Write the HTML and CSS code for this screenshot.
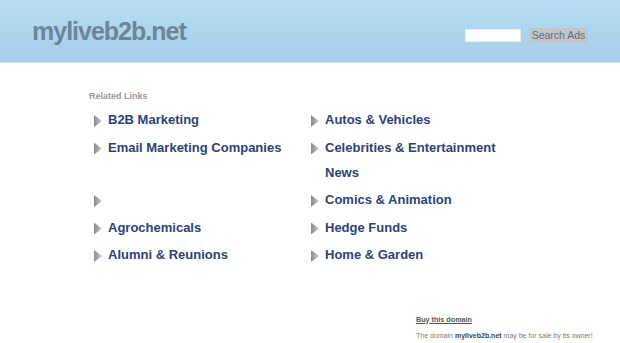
FILE: index.html
```html
<!DOCTYPE html>
<html>
<head>
<meta charset="utf-8">
<title>myliveb2b.net</title>
<link rel="stylesheet" href="styles.css">
</head>
<body>
<header class="header">
  <div class="logo">myliveb2b.net</div>
  <form class="search">
    <input class="search-input" type="text">
    <button class="search-btn" type="button">Search Ads</button>
  </form>
</header>
<main class="main">
  <div class="related">Related Links</div>
  <div class="links">
    <a class="link" href="#"><span class="arrow"></span><span class="label">B2B Marketing</span></a>
    <a class="link" href="#"><span class="arrow"></span><span class="label">Autos &amp; Vehicles</span></a>
    <a class="link" href="#"><span class="arrow"></span><span class="label">Email Marketing Companies</span></a>
    <a class="link" href="#"><span class="arrow"></span><span class="label">Celebrities &amp; Entertainment News</span></a>
    <a class="link" href="#"><span class="arrow"></span><span class="label"></span></a>
    <a class="link" href="#"><span class="arrow"></span><span class="label">Comics &amp; Animation</span></a>
    <a class="link" href="#"><span class="arrow"></span><span class="label">Agrochemicals</span></a>
    <a class="link" href="#"><span class="arrow"></span><span class="label">Hedge Funds</span></a>
    <a class="link" href="#"><span class="arrow"></span><span class="label">Alumni &amp; Reunions</span></a>
    <a class="link" href="#"><span class="arrow"></span><span class="label">Home &amp; Garden</span></a>
  </div>
</main>
<footer class="footer">
  <a class="buy" href="#">Buy this domain</a>
  <p class="sale">The domain <b>myliveb2b.net</b> may be for sale by its owner!</p>
</footer>
</body>
</html>
```
FILE: styles.css
```css
html, body {
  margin: 0;
  padding: 0;
  background: #ffffff;
  font-family: "Liberation Sans", Arial, sans-serif;
}
.header {
  box-sizing: border-box;
  height: 63px;
  background: linear-gradient(#b6ddf4, #a6cee8);
  border-bottom: 1px solid #c8e5f6;
  display: flex;
  justify-content: space-between;
  align-items: flex-start;
  padding: 0 32px 0 32px;
}
.logo {
  margin-top: 17px;
  font-size: 25px;
  line-height: 28px;
  font-weight: bold;
  letter-spacing: -1px;
  color: #6b8699;
}
.search {
  margin: 28px 0 0 0;
  display: flex;
  align-items: center;
  gap: 8px;
}
.search-input {
  box-sizing: border-box;
  width: 56px;
  height: 13px;
  border: 1px solid #e4eef4;
  background: #ffffff;
  padding: 0;
  margin: 0;
}
.search-btn {
  box-sizing: border-box;
  height: 15px;
  width: 59px;
  padding: 0;
  margin: 0;
  border: none;
  background: #c3c6c9;
  color: #5b6b84;
  font-family: "Liberation Sans", Arial, sans-serif;
  font-size: 10.5px;
  line-height: 15px;
}
.main {
  padding: 28px 0 0 89px;
}
.related {
  font-size: 9px;
  line-height: 11px;
  font-weight: bold;
  color: #9a9a9a;
}
.links {
  margin: 5px 0 0 5px;
  display: grid;
  grid-template-columns: 217px 217px;
  align-items: start;
}
.link {
  display: flex;
  align-items: flex-start;
  text-decoration: none;
  color: #2e4276;
  font-size: 13px;
  font-weight: bold;
  line-height: 25px;
  margin-bottom: 2.5px;
}
.arrow {
  flex: none;
  width: 8px;
  height: 12px;
  margin-top: 8px;
  margin-right: 6px;
  clip-path: polygon(0 0, 100% 50%, 0 100%);
  background: linear-gradient(to right, #8a8a8a, #b0b0b0 60%, #d0d0d0);
}
.label {
  width: 190px;
}
.footer {
  padding: 45px 0 0 416px;
}
.buy {
  display: block;
  font-size: 7.2px;
  line-height: 10px;
  font-weight: bold;
  color: #555555;
  text-decoration: underline;
}
.sale {
  margin: 6px 0 0 0;
  font-size: 7px;
  line-height: 10px;
  color: #7a7a7a;
}
.sale b {
  color: #444444;
}
```
